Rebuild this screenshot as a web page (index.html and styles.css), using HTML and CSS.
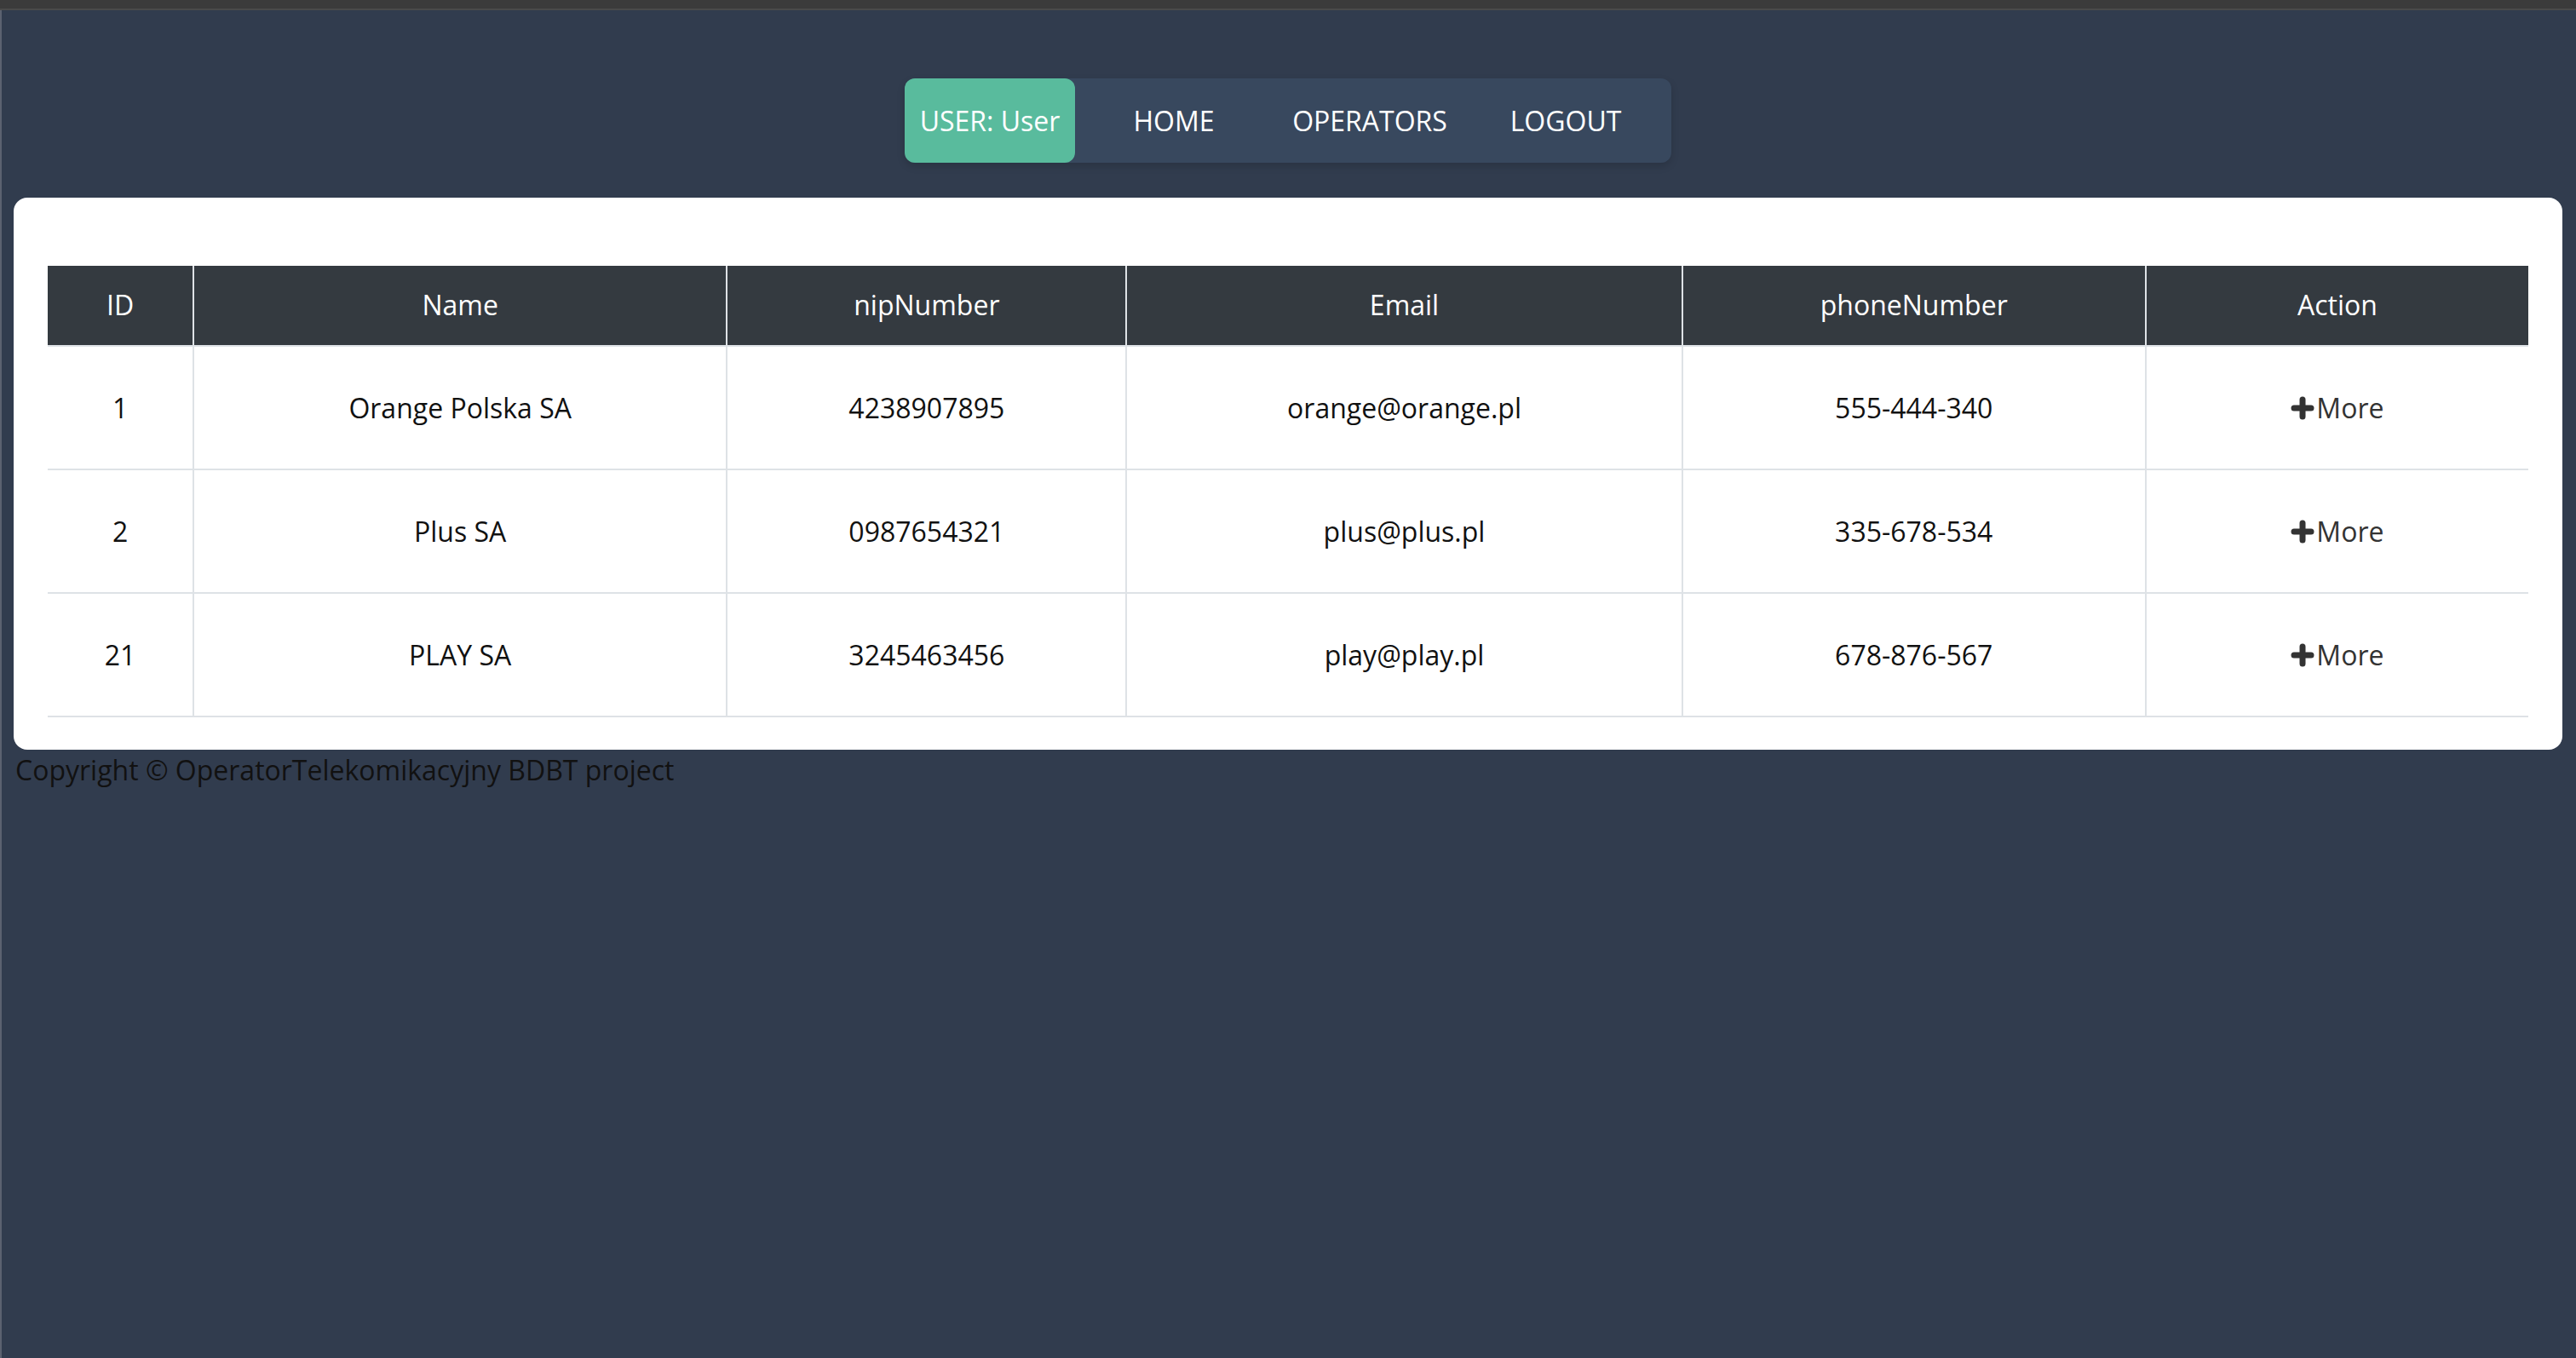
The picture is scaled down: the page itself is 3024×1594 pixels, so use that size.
FILE: index.html
```html
<!DOCTYPE html>
<html lang="en">
<head>
<meta charset="utf-8">
<title>Operators</title>
<link rel="stylesheet" href="styles.css">
</head>
<body>
<div class="chrome"></div>
<div class="page">
  <nav class="nav">
    <span class="nav-user">USER: User</span>
    <a class="nav-link" href="#">HOME</a>
    <a class="nav-link" href="#">OPERATORS</a>
    <a class="nav-link" href="#">LOGOUT</a>
  </nav>
  <main class="card">
    <table class="table">
      <colgroup>
        <col class="col-id">
        <col class="col-name">
        <col class="col-nip">
        <col class="col-email">
        <col class="col-phone">
        <col class="col-action">
      </colgroup>
      <thead>
        <tr>
          <th>ID</th>
          <th>Name</th>
          <th>nipNumber</th>
          <th>Email</th>
          <th>phoneNumber</th>
          <th>Action</th>
        </tr>
      </thead>
      <tbody>
        <tr>
          <td>1</td>
          <td>Orange Polska SA</td>
          <td>4238907895</td>
          <td>orange@orange.pl</td>
          <td>555-444-340</td>
          <td><a class="more" href="#"><svg class="plus" viewBox="0 0 28 28" width="28" height="28"><path d="M14 4V24M4 14H24"/></svg>More</a></td>
        </tr>
        <tr>
          <td>2</td>
          <td>Plus SA</td>
          <td>0987654321</td>
          <td>plus@plus.pl</td>
          <td>335-678-534</td>
          <td><a class="more" href="#"><svg class="plus" viewBox="0 0 28 28" width="28" height="28"><path d="M14 4V24M4 14H24"/></svg>More</a></td>
        </tr>
        <tr>
          <td>21</td>
          <td>PLAY SA</td>
          <td>3245463456</td>
          <td>play@play.pl</td>
          <td>678-876-567</td>
          <td><a class="more" href="#"><svg class="plus" viewBox="0 0 28 28" width="28" height="28"><path d="M14 4V24M4 14H24"/></svg>More</a></td>
        </tr>
      </tbody>
    </table>
  </main>
  <footer class="footer">Copyright © OperatorTelekomikacyjny BDBT project</footer>
</div>
</body>
</html>
```
FILE: styles.css
```css
html, body {
  margin: 0;
  padding: 0;
}
body {
  background: #313c4e;
  font-family: "Open Sans", "Noto Sans", sans-serif;
  font-size: 32px;
  line-height: 48px;
  color: #212529;
}
.chrome {
  height: 10px;
  background: #3b3b3b;
  border-bottom: 2px solid #4a4a4a;
}
.page {
  box-sizing: border-box;
  min-height: 1582px;
  border-left: 2px solid #5b6270;
  padding: 80px 16px 0 14px;
}
.nav {
  display: flex;
  gap: 2px;
  width: 900px;
  height: 99px;
  margin: 0 auto 41px;
  background: #38485e;
  border-radius: 12px;
  box-shadow: 0 4px 10px rgba(0, 0, 0, 0.15);
}
.nav-user {
  flex: 0 0 200px;
  display: flex;
  align-items: center;
  justify-content: center;
  background: #59bb9d;
  border-radius: 12px;
  color: #fff;
}
.nav-link {
  flex: 0 0 228px;
  display: flex;
  align-items: center;
  justify-content: center;
  color: #fff;
  text-decoration: none;
}
.card {
  display: block;
  background: #fff;
  border-radius: 16px;
  padding: 80px 40px 38px;
}
.table {
  width: 100%;
  border-collapse: separate;
  border-spacing: 0;
  table-layout: fixed;
}
.col-id { width: 170px; }
.col-name { width: 626px; }
.col-nip { width: 469px; }
.col-email { width: 652px; }
.col-phone { width: 544px; }
.col-action { width: 450px; }
.table th {
  height: 48px;
  background: #343a40;
  color: #fff;
  font-weight: 400;
  padding: 22px 0 23px;
  border-bottom: 2px solid #dee2e6;
  text-align: center;
  vertical-align: middle;
}
.table td {
  height: 48px;
  padding: 47.5px 0;
  border-bottom: 2px solid #dee2e6;
  text-align: center;
  vertical-align: middle;
  color: #111;
}
.table th + th,
.table td + td {
  border-left: 2px solid #dee2e6;
}
.more {
  display: inline-flex;
  align-items: center;
  vertical-align: top;
  height: 48px;
  color: #333;
  text-decoration: none;
}
.plus {
  display: block;
  margin-right: 2px;
}
.plus path {
  fill: none;
  stroke: #333;
  stroke-width: 7;
  stroke-linecap: round;
}
.footer {
  padding-left: 2px;
  color: #111;
}
```
